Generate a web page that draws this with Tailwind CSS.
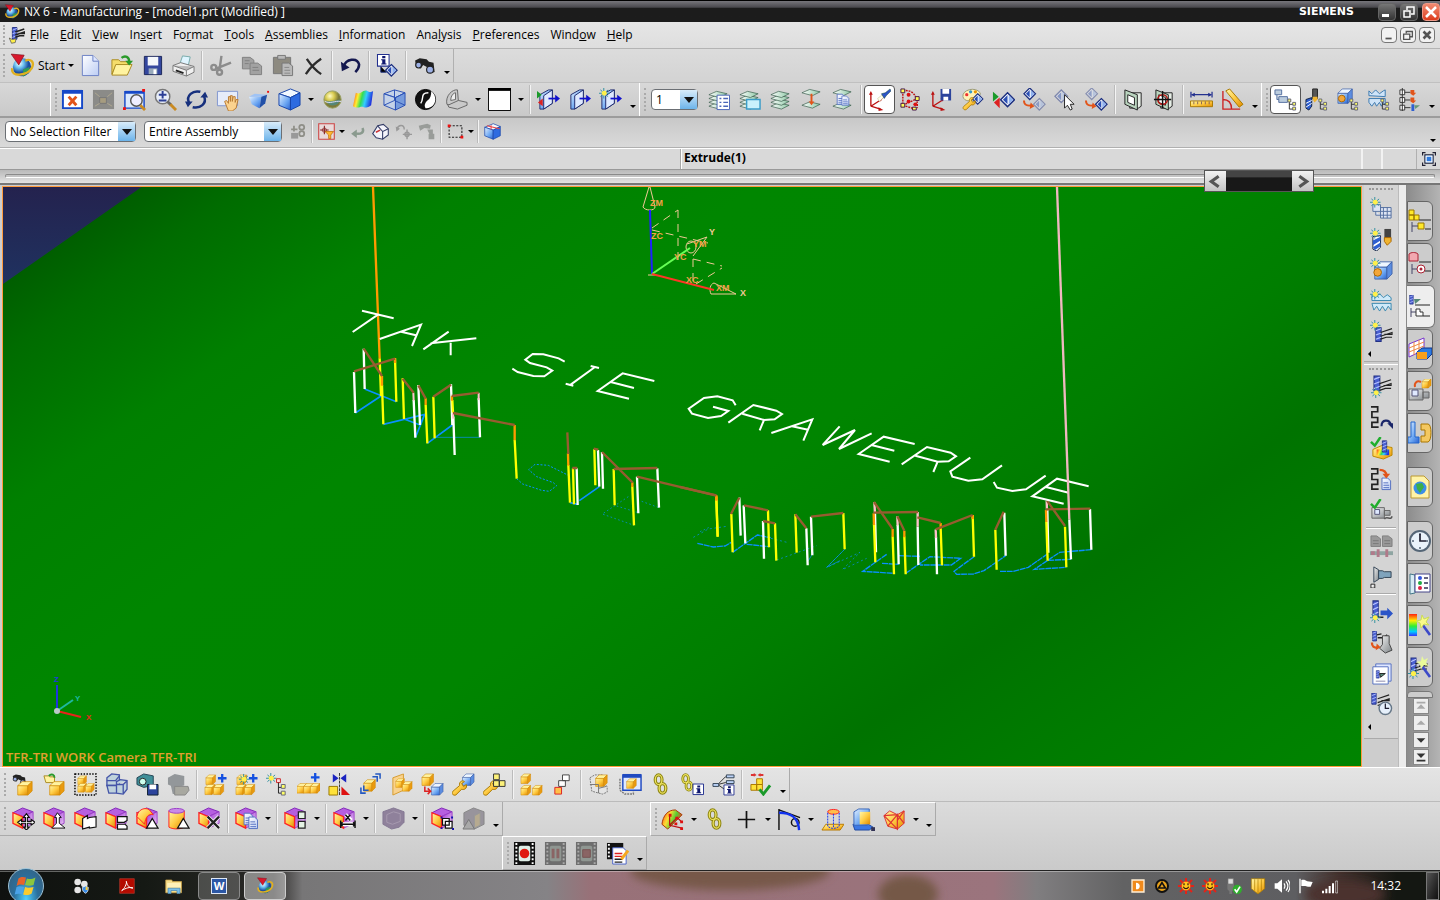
<!DOCTYPE html>
<html lang="en">
<head>
  <meta charset="UTF-8" />
  <meta name="viewport" content="width=device-width, initial-scale=1.0"/>
  <title>NX 6 - Manufacturing</title>
  <script src="https://cdn.jsdelivr.net/npm/@tailwindcss/browser@4"></script>
</head>
<body class="h-screen flex flex-col overflow-hidden bg-[#d4d4d4] text-black text-[12px] leading-4 font-['Open_Sans','Noto_Sans',sans-serif]">

  <!-- Icon sprite -->
  <svg class="absolute" width="0" height="0" aria-hidden="true">
    <defs>
      <linearGradient id="gy" x2="1" y2="1"><stop stop-color="#fff6a8"/><stop offset=".5" stop-color="#fc4"/><stop offset="1" stop-color="#e08a00"/></linearGradient>
      <linearGradient id="gb" x2="1" y2="1"><stop stop-color="#e4f1ff"/><stop offset=".6" stop-color="#6aa5f2"/><stop offset="1" stop-color="#2b62cf"/></linearGradient>
      <linearGradient id="gp" x2="1" y2="1"><stop stop-color="#9a30d0"/><stop offset="1" stop-color="#f3d8fb"/></linearGradient>
      <linearGradient id="gw" x2="1" y2="1"><stop stop-color="#fff"/><stop offset="1" stop-color="#bccdf4"/></linearGradient>
      <linearGradient id="gg" x2="1" y2="1"><stop stop-color="#f4f4f4"/><stop offset="1" stop-color="#7d8387"/></linearGradient>
      <linearGradient id="rain" x2="1" y2=".2"><stop stop-color="#f31"/><stop offset=".3" stop-color="#fe3"/><stop offset=".5" stop-color="#3d5"/><stop offset=".7" stop-color="#3cf"/><stop offset="1" stop-color="#23d"/></linearGradient>
      <linearGradient id="warm" x2="1" y2=".4"><stop stop-color="#f31"/><stop offset=".4" stop-color="#fd3"/><stop offset=".7" stop-color="#5c3"/><stop offset="1" stop-color="#e42"/></linearGradient>
      <linearGradient id="rainv" x2="0" y2="1"><stop stop-color="#f21"/><stop offset=".3" stop-color="#fe0"/><stop offset=".55" stop-color="#3e3"/><stop offset=".8" stop-color="#0cf"/><stop offset="1" stop-color="#33f"/></linearGradient>
      <radialGradient id="gs" cx=".35" cy=".3"><stop stop-color="#fff"/><stop offset=".5" stop-color="#6ac0f0"/><stop offset="1" stop-color="#1d4fa0"/></radialGradient>
      <radialGradient id="ball" cx=".35" cy=".3"><stop stop-color="#fffbc8"/><stop offset=".5" stop-color="#d9cc50"/><stop offset="1" stop-color="#7d7a3a"/></radialGradient>

      <g id="cy" stroke="#d28a00" stroke-width=".5"><path fill="url(#gy)" d="M0 3h7v7H0z"/><path fill="#fff3a0" d="M0 3l3-3h7L7 3z"/><path fill="#e99a10" d="M7 3l3-3v7l-3 3z"/></g>
      <g id="cb" stroke="#3c5fa8" stroke-width=".5"><path fill="url(#gb)" d="M0 3h7v7H0z"/><path fill="#eef6ff" d="M0 3l3-3h7L7 3z"/><path fill="#5c8de0" d="M7 3l3-3v7l-3 3z"/></g>
      <g id="cp"><path fill="#b65fe0" stroke="#8126b8" d="M1 6l10-5 11 4-11 5z"/><path fill="url(#gp)" stroke="#9b3fc8" d="M11 10l11-5v12l-11 5z"/><path fill="url(#gy)" stroke="#f22" stroke-width="1.400" d="M1 6l10 4v12L1 17z"/></g>
      <g id="star"><path stroke="#2f8fa0" d="M5 0v11M0 5.500h11M1.500 2l8 7M9.500 2l-8 7"/><circle cx="5.500" cy="5.500" r="2.600" fill="#fff04a"/></g>
      <g id="tree"><path fill="none" stroke="#333" d="M2 3v8M2 6h4M2 11h4"/><path fill="#ff6" stroke="#667" d="M.5.5h3v3h-3zM5.500 4h3v3h-3zM5.500 9h3v3h-3z"/></g>
      <g id="doc"><path fill="url(#gw)" stroke="#5570c0" d="M.5.5h6l3 3v9h-9z"/><path stroke="#5570c0" d="M2 5.500h5M2 8h6M2 10.500h6"/></g>
      <g id="mill"><path fill="#4a5fd0" stroke="#223083" d="M1 0h5v13H1z"/><path stroke="#b7c3ff" d="M1 3l5-2M1 7l5-2M1 11l5-2"/></g>
      <g id="holder"><path fill="none" stroke="#222" d="M0 4l12-4M0 8l12-4v2H4M0 11l6-2h6"/></g>
      <g id="info"><path fill="#fff" stroke="#23308f" d="M.5.5h11v11H.5z"/><path fill="#101870" d="M5 2h3v2H5zM4 5h4v4h1v1H4V9h1V6H4z"/></g>
      <g id="axes" fill="none" stroke="#b11" stroke-width="1.400"><path d="M3 19V6M3 19l10 3M3 19l11-7"/><path fill="#b11" stroke="none" d="M1 7l2-4 2 4zM11 20l5 3-5 1zM11 11l5-1-3 4z"/></g>
      <g id="dia"><path fill="#fff" stroke="#1b2f80" stroke-width="1.300" d="M6 0l6 6-6 6-6-6z"/><path fill="#2b50b5" d="M6 2v8L2 6z"/><path fill="#8fb1ee" d="M7 2v8l4-4z"/></g>
      <g id="sheet"><path fill="url(#sg)" stroke="#355a48" stroke-width=".7" d="M1 4l8-3.500L20 3l-8 4z"/></g>
      <linearGradient id="sg"><stop stop-color="#fff"/><stop offset="1" stop-color="#8cc7a4"/></linearGradient>
      <g id="chain" fill="none" stroke="#8c8410" stroke-width="3.400"><ellipse cx="8" cy="7" rx="3.500" ry="5"/><ellipse cx="12" cy="16" rx="3.500" ry="5"/><g stroke="#efe560" stroke-width="1.300"><ellipse cx="8" cy="7" rx="3.500" ry="5"/><ellipse cx="12" cy="16" rx="3.500" ry="5"/></g></g>
      <g id="binoc"><path fill="#222" d="M1 4l4-2 6 1 2 2 4 1 1 8-4 1-2-5-4-2-2 3-4-1z"/><circle cx="4" cy="8" r="2.500" fill="#9db1e6" stroke="#222"/><circle cx="14" cy="12" r="3" fill="#9db1e6" stroke="#222"/></g>
      <g id="wrench"><path fill="url(#gy)" stroke="#a87800" d="M1 12l7-6c-1-4 3-6 5-4L10 4l2 3 3-2c1 4-2 6-5 5l-6 6c-3 1-5-2-3-4z"/></g>
      <g id="film"><path fill="#111" d="M1 0h22v24H1z"/><path stroke="#fff" stroke-width="2" stroke-dasharray="2 2" d="M3.500 1v22M20.500 1v22"/><rect x="6" y="4" width="12" height="16" rx="2" fill="#dfeee6"/></g>
      <g id="warn"><path fill="#fff" stroke="#111" stroke-width="1.300" d="M6 0l6 10H0z"/></g>
      <g id="nxball"><circle cx="12" cy="13" r="8.500" fill="url(#gs)"/><path fill="#2f9a5a" d="M13 15l6-2-1 5-5 4z"/><path fill="none" stroke="#e0b020" stroke-width="2.200" d="M3 14c-2 9 14 7 18 0 3-6-1-9-6-7"/><path fill="#d8182c" stroke="#7e0b18" stroke-width=".6" d="M2 1l12 1-5 9z"/></g>
    </defs>

    <symbol id="nx" viewBox="0 0 24 24"><use href="#nxball"/></symbol>
    <symbol id="part" viewBox="0 0 24 24"><use href="#mill" transform="translate(6 2) scale(1.200)"/><use href="#holder" transform="translate(11 4)" stroke-width="2"/><path fill="#fff04a" stroke="#555" d="M3 16l4 2 5-1-1 5-5 1z"/></symbol>
    <!-- standard -->
    <symbol id="new" viewBox="0 0 24 24"><path fill="url(#gw)" stroke="#6a7fc4" d="M3.500 1.500h11l6 6v15h-17z"/><path fill="#dfe7ff" stroke="#6a7fc4" d="M14.500 1.500v6h6"/></symbol>
    <symbol id="open" viewBox="0 0 24 24"><path fill="#f5dd6a" stroke="#a98a20" d="M2 6h7l2 2h8v4H6L2 21z"/><path fill="#fff3a0" stroke="#a98a20" d="M6 11h17l-5 11H2z"/><path fill="none" stroke="#2a9a2a" stroke-width="2.500" d="M12 4c4-3 8-1 8 4"/><path fill="#2a9a2a" d="M16 7h8l-4 5z"/></symbol>
    <symbol id="save" viewBox="0 0 24 24"><path fill="#34479e" stroke="#1b2658" d="M3.500 2.500h18v19h-18z"/><path fill="#f4f7fb" d="M7 3h11v9H7z"/><path fill="#9ab" d="M8 15h9v6H8z"/><path fill="#fff" d="M13 16h3v5h-3z"/></symbol>
    <symbol id="print" viewBox="0 0 24 24"><path fill="#dff5ff" stroke="#7aa" d="M11 2l8 1-2 9-9-1z"/><path fill="#f0f0f0" stroke="#777" d="M1 12l8-3 14 4v6l-8 4L1 18z"/><path fill="#bbb" stroke="#777" d="M1 12l14 5 8-4M15 17v6"/><path stroke="#222" stroke-width="2" d="M4 17l8 3"/></symbol>
    <symbol id="cut" viewBox="0 0 24 24"><g fill="none" stroke="#8c8c8c" stroke-width="2.500"><path d="M13 2l-2 14M23 9L8 15"/><circle cx="11" cy="19" r="2.600"/><circle cx="5" cy="14" r="2.600"/></g></symbol>
    <symbol id="copy" viewBox="0 0 24 24"><g fill="#a2a2a2" stroke="#808080"><path d="M2.500 3.500h8l4 3v9h-12z"/><path d="M10.500 9.500h8l4 3v9h-12z"/><path d="M5 7h5M5 10h4M13 14h6M13 17h7"/></g></symbol>
    <symbol id="paste" viewBox="0 0 24 24"><path fill="#8d8a80" stroke="#777" d="M2.500 3.500h18v17h-18z"/><path fill="#b9b9b9" stroke="#777" d="M7 1.500h8v4H7zM11.500 9.500h7l4 3v10h-11z"/><path stroke="#888" d="M14 14h5M14 17h6M14 20h6"/></symbol>
    <symbol id="delete" viewBox="0 0 24 24"><path fill="none" stroke="#2c2c2c" stroke-width="2.400" d="M5 5c4 6 9 12 15 16M20 5C14 9 8 15 4 21"/></symbol>
    <symbol id="undo" viewBox="0 0 24 24"><path fill="none" stroke="#14184f" stroke-width="2.600" d="M5 13C7 5 19 3 21 11c0 4-2 6-4 8"/><path fill="#14184f" d="M2 8l1 10 8-4z"/></symbol>
    <symbol id="infow" viewBox="0 0 24 24"><use href="#info" transform="translate(1 0) scale(1.100)"/><path stroke="#1b2f80" d="M5 13v6h6"/><use href="#dia" transform="translate(10 11)"/></symbol>
    <symbol id="find" viewBox="0 0 24 24"><use href="#binoc" transform="translate(1 2) scale(1.200)"/></symbol>
    <!-- view -->
    <symbol id="fit" viewBox="0 0 24 24"><path fill="#fff" stroke="#1648c8" stroke-width="2" d="M2 3h20v18H2z"/><path fill="#1648c8" d="M2 2h20v4H2z"/><path stroke="#e2541a" stroke-width="3" d="M8 9l8 9M16 9l-8 9"/></symbol>
    <symbol id="fitsel" viewBox="0 0 24 24"><path fill="#8b8b88" d="M1 2h22v20H1z"/><path fill="#a69c80" stroke="#777" d="M8 10h7v6H8z"/><path stroke="#b0a890" d="M3 5l5 4M21 5l-5 4M3 19l5-3M21 19l-5-3"/></symbol>
    <symbol id="zoomwin" viewBox="0 0 24 24"><path fill="#dbe9fc" stroke="#1648c8" stroke-width="1.500" d="M2 4h20v17H2z"/><path fill="#1648c8" d="M2 3h20v3H2z"/><circle cx="14" cy="13" r="6" fill="#eef" stroke="#555" stroke-width="1.500"/><path stroke="#c98a22" stroke-width="3" d="M18 18l5 5"/><path fill="#e11" d="M20 1h3v3h-3zM0 20h3v3H0z"/></symbol>
    <symbol id="zoomio" viewBox="0 0 24 24"><circle cx="9" cy="9" r="7.500" fill="#e8eef8" stroke="#777" stroke-width="1.500"/><path stroke="#2c3f95" stroke-width="2" d="M5 7h8M9 3v8M5 13h8"/><path stroke="#666" stroke-width="3" d="M14 14l4 4"/><path stroke="#c98a22" stroke-width="3" d="M17 17l6 6"/></symbol>
    <symbol id="rotate" viewBox="0 0 24 24"><g fill="none" stroke="#17307d" stroke-width="2.600"><path d="M4 15C1 8 8 2 16 4M20 9c3 7-4 13-12 11"/></g><path fill="#17307d" d="M0 14h8l-5 6zM16 10l8 0-3-6z"/></symbol>
    <symbol id="pan" viewBox="0 0 24 24"><path fill="#e6ecfa" stroke="#7f95cf" d="M1.500 3.500h21v15h-21z"/><path fill="#fbd28e" stroke="#b87a32" d="M9 14l2-1 2 3V9h2v5-6h2v6l1-5h2v6l1-3h2l-2 9-4 3h-4z"/></symbol>
    <symbol id="persp" viewBox="0 0 24 24"><path fill="url(#gb)" d="M2 9h13l-2 12-8-4z"/><path fill="#9fc3f5" d="M2 9l6-3 13 1-6 2z"/><path fill="#2351a8" d="M15 9l6-2-2 9-6 5z"/><path fill="#e11" d="M21 3h2v2h-2z"/></symbol>
    <symbol id="iso" viewBox="0 0 24 24"><g stroke="#1744a8"><path fill="#f2f8ff" d="M1 6l12-5 10 4-10 5z"/><path fill="url(#gb)" d="M1 6l12 4v13L1 18z"/><path fill="#2e6be0" d="M13 10l10-5v13l-10 5z"/></g></symbol>
    <symbol id="render" viewBox="0 0 24 24"><circle cx="12" cy="12" r="9" fill="url(#ball)" stroke="#98a060"/><path fill="#4b8a86" d="M5 13c5 2 9 0 15-1-1 7-12 9-15 1z" opacity=".8"/><path fill="none" stroke="#ddf" d="M4 14c6 3 10-1 17 0"/></symbol>
    <symbol id="rainbow" viewBox="0 0 24 24"><path fill="url(#rain)" d="M4 5c5 3 7-4 12-2 2 1 3 2 6 0l-2 15c-6 5-8 0-12 2-3 1-5 0-7-1z"/></symbol>
    <symbol id="wire" viewBox="0 0 24 24"><g stroke="#2b50b5" fill="#bcd3f8" fill-opacity=".6"><path d="M1 6l11-4 11 3-10 5z"/><path d="M1 6l12 4v13L1 18z"/><path fill="#3b78e4" d="M13 10l10-5v13l-10 5z"/><path fill="none" d="M12 2v11l11 5M12 13L1 18"/></g></symbol>
    <symbol id="yin" viewBox="0 0 24 24"><circle cx="12" cy="12" r="10.500" fill="#111" stroke="#000"/><path fill="#fff" d="M18 3c8 7 4 19-6 18-2-3 0-6 2-8 3-2 4-5 4-10z"/><path fill="none" stroke="#fff" stroke-width="1.500" d="M15 5c-9 0-4 6-8 11"/></symbol>
    <symbol id="clip" viewBox="0 0 24 24"><g fill="#c9c9c9" stroke="#666"><path d="M2 17C0 8 8 1 13 2l1 12-9 4z"/><path d="M3 18l11-5 9 2v3l-10 4-9-2z"/><path fill="#eee" d="M6 13c0-5 3-8 5-8v7z"/></g></symbol>
    <symbol id="white" viewBox="0 0 24 24"><path fill="#fff" stroke="#000" d="M.5.5h23v23H.5z"/><path d="M0 0h24v3H0z"/></symbol>
    <symbol id="slab" viewBox="0 0 24 24"><g stroke="#1e2a6e"><path fill="url(#gb)" d="M3 7l9-5h4v14l-9 6H3z"/><path fill="#dfe9ff" d="M7 8l9-6v14l-9 6z"/></g><path stroke="#11c" stroke-width="1.800" d="M12 11h8"/><path fill="#11c" d="M19 7l5 4-5 4z"/></symbol>
    <symbol id="slabgo" viewBox="0 0 24 24"><use href="#slab"/><path fill="#1a9a2a" d="M0 3l5 4-5 4z"/><path fill="#d22" d="M6 11v8l-5-4z"/></symbol>
    <symbol id="slabnew" viewBox="0 0 24 24"><use href="#slab"/><use href="#star"/></symbol>
    <!-- layers -->
    <symbol id="stack" viewBox="0 0 24 24"><use href="#sheet" x="1" y="15"/><use href="#sheet" x="1" y="11"/><use href="#sheet" x="1" y="7"/><use href="#sheet" x="1" y="3"/></symbol>
    <symbol id="layset" viewBox="0 0 24 24"><use href="#stack"/><path fill="#fff" stroke="#4b66b8" d="M10.500 7.500h13v15h-13z"/><path stroke="#4b66b8" stroke-width="1.500" d="M13 11h2M13 15h2M13 19h2M17 11h5M17 15h5M17 19h5"/></symbol>
    <symbol id="laywin" viewBox="0 0 24 24"><use href="#stack"/><path fill="#c9f1fc" stroke="#3b9cc8" stroke-width="1.500" d="M9 12h14v10H9z"/></symbol>
    <symbol id="laymove" viewBox="0 0 24 24"><use href="#sheet" x="1" y="1"/><use href="#sheet" x="1" y="14"/><path fill="#e2541a" d="M11 6h2v8h2l-3 4-3-4h2z"/></symbol>
    <symbol id="laycopy" viewBox="0 0 24 24"><use href="#sheet" x="1" y="1"/><use href="#sheet" x="1" y="15"/><use href="#doc" transform="translate(6 6) scale(.9)"/><use href="#doc" transform="translate(11 8) scale(.8)"/></symbol>
    <!-- wcs and object display -->
    <symbol id="wcs" viewBox="0 0 24 24"><use href="#axes"/><path fill="#ffe" stroke="#bb8" stroke-width=".5" d="M10 11l5-4 2 2-5 5z"/><path fill="#2c55c8" stroke="#143" stroke-width=".5" d="M14 6l4-1 5-4 1 2-5 5-2 3z"/></symbol>
    <symbol id="wcsdyn" viewBox="0 0 24 24"><path fill="none" stroke="#b11" stroke-dasharray="2 1" stroke-width="1.500" d="M4 3v15l13 4M4 18l15-7M4 3c10-2 16 5 15 18"/><path fill="#ff5" stroke="#414" d="M2 1h4v4H2zM2 16h4v4H2zM17 9h4v4h-4zM14 20h4v3h-4z"/><circle cx="10" cy="7" r="2" fill="#d11"/><circle cx="10" cy="14" r="2" fill="#d11"/><circle cx="17" cy="17" r="2" fill="#d11"/></symbol>
    <symbol id="wcssave" viewBox="0 0 24 24"><use href="#axes"/><path fill="#2c449c" d="M11 1h11v12H11z"/><path fill="#fff" d="M13 1h7v5h-7zM14 9h5v4h-5z"/></symbol>
    <symbol id="palette" viewBox="0 0 24 24"><path fill="#fff3b8" stroke="#997" d="M2 9C1 2 15-2 20 5c1 5-5 3-6 6-3 4-11 3-12-2z"/><g><circle cx="6" cy="7" r="1.700" fill="#e33"/><circle cx="10" cy="4" r="1.700" fill="#39c"/><circle cx="15" cy="4" r="1.700" fill="#e90"/></g><use href="#dia" transform="translate(12 6) scale(.9)"/><use href="#wrench" transform="translate(2 9) scale(.85)"/></symbol>
    <symbol id="showhide" viewBox="0 0 24 24"><path fill="#1a9a2a" d="M1 4l6 5-6 5z"/><path fill="#d22" d="M8 10v11l-6-6z"/><use href="#dia" transform="translate(9 5) scale(1.200)"/></symbol>
    <symbol id="hide" viewBox="0 0 24 24"><use href="#dia" transform="translate(1 0)"/><use href="#dia" transform="translate(11 11)" opacity=".4"/><path fill="none" stroke="#e2541a" stroke-width="2" d="M1 13c0 5 4 6 8 5"/><path fill="#e2541a" d="M8 15l4 4-5 3z"/></symbol>
    <symbol id="showsel" viewBox="0 0 24 24"><use href="#dia" transform="translate(1 2) scale(1.100)" opacity=".45"/><path fill="#fff" stroke="#222" d="M11 7v14l3-3 3 5 2-1-2-5h4z"/></symbol>
    <symbol id="showall" viewBox="0 0 24 24"><use href="#dia" transform="translate(1 0)" opacity=".4"/><use href="#dia" transform="translate(11 11)"/><path fill="none" stroke="#e2541a" stroke-width="2" d="M1 13c0 5 4 6 8 5"/><path fill="#e2541a" d="M8 15l4 4-5 3z"/></symbol>
    <symbol id="section" viewBox="0 0 24 24"><g stroke="#222" fill="#e6eee6"><path d="M10 5h10v14l-3 2H8z"/><path fill="#b9d4be" d="M3 2l13 5v16L3 17z"/><path fill="#fff" d="M6 7l7 3v8l-7-3z"/></g></symbol>
    <symbol id="sectedit" viewBox="0 0 24 24"><use href="#section"/><g fill="none" stroke="#b11" stroke-width="1.500"><circle cx="10" cy="12" r="5"/></g><path stroke="#111" stroke-width="1.500" d="M1 12h18M10 3v18"/></symbol>
    <symbol id="measure" viewBox="0 0 24 24"><path fill="url(#gy)" stroke="#a87800" d="M.5 13.500h23v6H.5z"/><path stroke="#865" d="M4 14v3M8 14v3M12 14v3M16 14v3M20 14v3"/><path stroke="#23308f" stroke-width="1.300" d="M2 7h20M1 4v6M23 4v6"/><path fill="#23308f" d="M1 7l4-2v4zM23 7l-4-2v4z"/></symbol>
    <symbol id="angle" viewBox="0 0 24 24"><path fill="none" stroke="#c22" stroke-width="1.400" d="M2 3v19h18M2 12c6 0 9 4 9 10"/><path fill="url(#gy)" stroke="#a87800" d="M5 3l4-2 14 16-4 3z"/></symbol>
    <!-- navigator views -->
    <symbol id="navprog" viewBox="0 0 24 24"><path fill="#bcd" stroke="#5570a0" d="M1 2h7v5H1zM5 9h9v6H5zM3 7v5h2"/><use href="#tree" transform="translate(14 11)"/></symbol>
    <symbol id="navtool" viewBox="0 0 24 24"><path fill="#555" stroke="#222" d="M8 1h5v10H8z"/><path fill="#f0b430" d="M8 9h5v3l-3 3-2-3z"/><path fill="#2f5fd0" stroke="#124" d="M1 12l6-2v9l-3 4-3-2z"/><path stroke="#fff" d="M1 16l6-3M1 20l6-4"/><use href="#tree" transform="translate(14 11)"/></symbol>
    <symbol id="navgeo" viewBox="0 0 24 24"><use href="#cb" transform="translate(2 1) scale(1.500)"/><circle cx="6" cy="11" r="3.500" fill="#f3a63a" stroke="#a60"/><use href="#tree" transform="translate(14 11)"/></symbol>
    <symbol id="navmeth" viewBox="0 0 24 24"><path fill="#cfe4f8" stroke="#3a78b0" d="M2 8V3l3 3 4-4 4 4 4-3 2-1v7zM2 11h17v7l-2-3-2 4-2-4-3 4-2-4-3 4-3-4z"/><use href="#tree" transform="translate(14 11)"/></symbol>
    <symbol id="navexp" viewBox="0 0 24 24"><path fill="#fff" stroke="#333" d="M2 2h5v5H2zM2 10h5v5H2zM2 18h5v5H2zM4.500 0v24M7 4.500h6M7 12.500h6M7 20.500h6"/><path fill="#e2541a" d="M13 2h4v3h2l-3 3-3-2zM13 10h4v3h2l-3 3-3-2z"/><path fill="#2f5fd0" d="M14 17h3v7h-3z"/><path fill="#697" d="M17 18h6l-5 4z"/></symbol>
    <!-- selection bar -->
    <symbol id="selgrey" viewBox="0 0 24 24"><g fill="none" stroke="#8f8f88" stroke-width="2.500"><path d="M3 9h9M7 4v8"/><circle cx="18" cy="6" r="3.500"/><circle cx="18" cy="15" r="3.500"/></g><path fill="#999" d="M3 14h10v8H3z"/></symbol>
    <symbol id="selfilt" viewBox="0 0 24 24"><path fill="#e9dada" stroke="#c44" stroke-width="1.500" d="M1 1h22v22H1z"/><circle cx="9" cy="10" r="3" fill="none" stroke="#822"/><path stroke="#822" stroke-width="1.500" d="M9 4v12M3 10h12"/><path fill="#ffb62e" stroke="#b60" d="M10 12h12l-4 5v5h-3v-5z"/></symbol>
    <symbol id="back" viewBox="0 0 24 24"><path fill="none" stroke="#8a9a8e" stroke-width="3.500" d="M19 7c3 6-2 9-9 8"/><path fill="#8a9a8e" d="M3 15l8-6v12z"/></symbol>
    <symbol id="eraser" viewBox="0 0 24 24"><path fill="#f4f4fb" stroke="#333c66" stroke-width="1.500" d="M1 15l7-11 8-2 7 6v9l-8 6-9-2z"/><path fill="none" stroke="#333c66" stroke-width="1.500" d="M15 23V12l8-4M8 4l7 8"/><path fill="#c33" d="M5 12l6-3 1 2-6 3z"/></symbol>
    <symbol id="greyaim" viewBox="0 0 24 24"><g fill="none" stroke="#999" stroke-width="2"><path d="M3 8c2-6 10-6 10 1M11 16h13M17 9v14"/><circle cx="17" cy="16" r="3"/></g><path fill="#999" d="M1 5l1 7 5-4z"/></symbol>
    <symbol id="greytool" viewBox="0 0 24 24"><path fill="#999c99" d="M1 4l12-3 5 2-1 5-8-1-6 4zM13 9h8v6h-5zM15 15h8v8h-8z"/></symbol>
    <symbol id="rect" viewBox="0 0 24 24"><path fill="none" stroke="#222" stroke-width="1.500" stroke-dasharray="3 2" d="M3 4h18v16H3z"/><path fill="#e11" d="M1 2h4v4H1zM19 18h4v4h-4z"/></symbol>
    <symbol id="snapcube" viewBox="0 0 24 24"><use href="#iso"/><path stroke="#e44" stroke-width="1.500" d="M10 3v6M4 4l18 4"/></symbol>
    <symbol id="full" viewBox="0 0 24 24"><path fill="none" stroke="#223" stroke-width="2" d="M1 6V1h5M18 1h5v5M23 18v5h-5M6 23H1v-5"/><path fill="#2e7be0" stroke="#223" stroke-width="2" d="M5 5h14v14H5z"/><path fill="none" stroke="#fff" stroke-width="2" d="M7 7h10v10H7z"/></symbol>
    <!-- assemblies -->
    <symbol id="a1" viewBox="0 0 24 24"><use href="#binoc" transform="translate(0 0) scale(.8)"/><use href="#cy" transform="translate(6 9) scale(1.500 1.400)"/></symbol>
    <symbol id="a2" viewBox="0 0 24 24"><path fill="#fff3a0" stroke="#a98a20" d="M1 3h5l1 1h5v6H3z"/><path fill="none" stroke="#2a9a2a" stroke-width="2" d="M6 3c3-3 6-1 6 2"/><use href="#cy" transform="translate(7 9) scale(1.500 1.400)"/></symbol>
    <symbol id="a3" viewBox="0 0 24 24"><path fill="none" stroke="#000" stroke-width="1.500" stroke-dasharray="1.500 1.500" d="M1 1h22v22H1z"/><use href="#cy" transform="translate(4 3) scale(.9)"/><use href="#cy" transform="translate(4 11) scale(.9)"/><use href="#cy" transform="translate(12 11) scale(.9)"/></symbol>
    <symbol id="a4" viewBox="0 0 24 24"><g fill="#bfd2dc" stroke="#4555a8" stroke-width="1.400"><path d="M2 5l5-4 8 1v11H2z"/><path d="M2 13h10v8H4zM12 9l4-2 7 1v9l-4 5-7-1zM12 12h7l4-4M19 12v9M2 8h9l4-5"/></g></symbol>
    <symbol id="a5" viewBox="0 0 24 24"><path fill="#3f8f98" stroke="#245" d="M1 5l7-4 10 2v10l-10 2-7-3z"/><circle cx="7" cy="9" r="3.500" fill="#cfe" stroke="#222"/><path fill="#2c449c" stroke="#123" d="M12 12h11v11H12z"/><path fill="#fff" d="M14 12h7v5h-7z"/></symbol>
    <symbol id="a6" viewBox="0 0 24 24"><path fill="#93979a" d="M1 5l7-4 10 2v10l-10 2-7-3zM4 13h9v9H6z"/><path fill="#a8a8a0" stroke="#888" d="M8 14h14l1 4-4 5H8z"/></symbol>
    <symbol id="a7" viewBox="0 0 24 24"><use href="#cy" transform="translate(2 2)"/><use href="#cy" transform="translate(1 12) scale(1.050)"/><use href="#cy" transform="translate(10 12) scale(1.050)"/><path stroke="#1450e0" stroke-width="2.400" d="M19 1v9M14.500 5.500h9"/></symbol>
    <symbol id="a8" viewBox="0 0 24 24"><use href="#a7"/><use href="#star" transform="translate(4 1)"/></symbol>
    <symbol id="a9" viewBox="0 0 24 24"><use href="#star"/><path fill="#fdd" stroke="#c22" d="M11 6h4v4h-4z"/><path stroke="#222" d="M13 10v11h3M13 15h3" fill="none"/><path fill="#ff6" stroke="#667" d="M16 12h4v4h-4zM16 19h4v4h-4z"/></symbol>
    <symbol id="a10" viewBox="0 0 24 24"><use href="#cy" transform="translate(0 11)"/><use href="#cy" transform="translate(7 11)"/><use href="#cy" transform="translate(14 11)"/><path stroke="#1450e0" stroke-width="2.400" d="M19 0v9M14.500 4.500h9"/></symbol>
    <symbol id="a11" viewBox="0 0 24 24"><path fill="#1a23c0" d="M5 1v9l6-4.500zM19 1v9l-6-4.500z"/><path stroke="#333" stroke-dasharray="3 1" d="M12 0v24"/><path fill="#ffe23a" stroke="#970" d="M1 14h9v9H1z"/><path fill="#d11" d="M14 14l9 9h-9z"/></symbol>
    <symbol id="a12" viewBox="0 0 24 24"><use href="#cy" transform="translate(5 7) scale(1.200)"/><path fill="none" stroke="#2458c0" stroke-width="1.600" d="M17 1h5v5M14 4h5v5M2 15v6h5M5 13v5h5"/></symbol>
    <symbol id="a13" viewBox="0 0 24 24"><path fill="#ffcf7a" stroke="#d28a00" d="M3 5l11-4v17L3 23z" opacity=".8"/><use href="#cy" transform="translate(6 6) scale(.9)"/><use href="#cy" transform="translate(13 9)"/></symbol>
    <symbol id="a14" viewBox="0 0 24 24"><use href="#cy" transform="translate(1 1) scale(1.200)"/><use href="#cb" transform="translate(11 11) scale(1.200)"/><path fill="none" stroke="#d22" stroke-width="1.600" d="M4 14v5h5M7 16l3 3-3 3"/></symbol>
    <symbol id="a15" viewBox="0 0 24 24"><use href="#cb" transform="translate(11 1) scale(1.200)"/><use href="#wrench" transform="translate(0 7)"/></symbol>
    <symbol id="a16" viewBox="0 0 24 24"><use href="#wrench" transform="translate(0 7)"/><path fill="#fbf07a" stroke="#333" d="M11 1h6v6h-6zM11 8h6v6h-6zM17 8h6v6h-6z"/></symbol>
    <symbol id="a17" viewBox="0 0 24 24"><use href="#cy" transform="translate(1 1)"/><use href="#cy" transform="translate(1 13)"/><use href="#cy" transform="translate(13 13)"/></symbol>
    <symbol id="a18" viewBox="0 0 24 24"><path fill="#fff" stroke="#444" d="M12 2h7v6h-7zM8 8h7v6H8z"/><path fill="#ffc04a" stroke="#d22" d="M4 15h7v7H4z"/></symbol>
    <symbol id="a19" viewBox="0 0 24 24"><path fill="#e4e4e4" stroke="#777" stroke-dasharray="2 1" d="M2 5l5-3h8v9l5 3v6l-5 2-11-3z"/><use href="#cy" transform="translate(8 2) scale(1.200)"/><path fill="none" stroke="#777" d="M2 12h9v9M11 16l8-2"/></symbol>
    <symbol id="a20" viewBox="0 0 24 24"><path fill="#dfe9ff" stroke="#1f49c0" stroke-width="1.500" d="M4 2h19v16H4z"/><path fill="#1f49c0" d="M4 1h19v4H4z"/><use href="#cy" transform="translate(8 6)"/><path fill="none" stroke="#777" stroke-dasharray="2 1" stroke-width="1.500" d="M1 6v12l5 4h9v-3"/></symbol>
    <symbol id="a21" viewBox="0 0 24 24"><use href="#chain" transform="translate(1 0)"/></symbol>
    <symbol id="a22" viewBox="0 0 24 24"><use href="#chain" transform="translate(-2 0) scale(.85)"/><use href="#info" transform="translate(12 11)"/></symbol>
    <symbol id="a23" viewBox="0 0 24 24"><path fill="none" stroke="#333" d="M6 12L14 4h2M6 12l8-2h2M6 12l7 5"/><path fill="#bcd3f8" stroke="#345" d="M1 11h6v3H1zM15 2h8v3h-8zM15 8h8v3h-8z"/><use href="#info" transform="translate(12 12) scale(.95)"/></symbol>
    <symbol id="a24" viewBox="0 0 24 24"><path fill="#d33" d="M2 1h3V0l3 2-3 2V3H2zM15 1h-3V0L9 2l3 2V3h3z"/><path fill="#ffe23a" stroke="#a70" d="M8 6h6v6H8zM2 12h6v6H2zM8 12h6v6H8z"/><path fill="none" stroke="#1a9a2a" stroke-width="3" d="M11 17l4 5 7-9"/></symbol>
    <!-- synchronous modelling -->
    <symbol id="s1" viewBox="0 0 24 24"><use href="#cp"/><path fill="#fff" stroke="#111" stroke-width="1.200" d="M15 7l3 4h-2v4h4v-2l4 3-4 3v-2h-4v4h2l-3 3-3-3h2v-4h-4v2l-4-3 4-3v2h4v-4h-2z"/></symbol>
    <symbol id="s2" viewBox="0 0 24 24"><use href="#cp"/><path fill="#fff" stroke="#111" d="M15 6l4 5h-2v6l6 5H9l5-5v-6h-2z"/></symbol>
    <symbol id="s3" viewBox="0 0 24 24"><use href="#cp"/><path fill="#fff" stroke="#111" stroke-width="1.200" d="M9 12l5-3v3l2-1 7-1v11l-7 1v-1l-7 2z"/></symbol>
    <symbol id="s4" viewBox="0 0 24 24"><use href="#cp"/><path fill="#fff" stroke="#111" stroke-width="1.300" d="M13 10h10v4l-3 2h-7zM13 18h8l2 2v3H13z"/></symbol>
    <symbol id="s5" viewBox="0 0 24 24"><use href="#cp"/><path fill="url(#gy)" stroke="#f22" d="M1 10c1-8 9-10 13-7l4 5c-5-1-8 2-9 10z"/><use href="#warn" transform="translate(11 12)"/></symbol>
    <symbol id="s6" viewBox="0 0 24 24"><path fill="url(#gy)" stroke="#f22" d="M2 4v17c5 3 13 2 16 0V4z"/><ellipse cx="10" cy="4" rx="8" ry="2.500" fill="#c98be8" stroke="#9b3fc8"/><use href="#warn" transform="translate(11 12)"/></symbol>
    <symbol id="s7" viewBox="0 0 24 24"><use href="#cp"/><path stroke="#fff" stroke-width="4" d="M10 10l12 12M22 10L10 22"/><path stroke="#222" stroke-width="2.400" d="M10 10l12 12M22 10L10 22"/></symbol>
    <symbol id="s8" viewBox="0 0 24 24"><use href="#cp"/><use href="#doc" transform="translate(9 6)"/><use href="#doc" transform="translate(14 10)"/></symbol>
    <symbol id="s9" viewBox="0 0 24 24"><use href="#cp"/><path fill="#e4f3e4" stroke="#222" stroke-width="1.300" d="M15 5h7v7h-7zM15 15h7v7h-7z"/></symbol>
    <symbol id="s10" viewBox="0 0 24 24"><use href="#cp"/><path stroke="#fff" stroke-width="4" d="M8 18h15M13 8l6 6"/><path fill="none" stroke="#111" stroke-width="1.500" d="M8 18h15M8 14v8M23 14v8M13 8l5 6M18 8l-5 6M10 16l-2 2 2 2M21 16l2 2-2 2"/></symbol>
    <symbol id="s11" viewBox="0 0 24 24"><path fill="#8f819b" stroke="#857893" d="M1 5l11-4 11 4v11l-5 5-8 2-9-5z"/><path fill="none" stroke="#a79bb0" d="M5 8v8l6 2 8-3V7M5 8l7-3 7 2"/></symbol>
    <symbol id="s12" viewBox="0 0 24 24"><use href="#cp"/><path fill="#fff" stroke="#111" stroke-width="1.300" d="M12 12h7v7h-7zM15 15h7v7h-7z"/><path fill="#11a" d="M10 10h2v2h-2zM21 10h2v2h-2zM10 21h2v2h-2zM22 22h2v2h-2z"/></symbol>
    <symbol id="s13" viewBox="0 0 24 24"><path fill="#98949c" stroke="#888" d="M2 6l10-5 11 4v13l-10 5L2 19z"/><path fill="#b6aa90" stroke="#999" d="M13 9l6-3v13l-6 3z"/><path fill="#a9a9a9" stroke="#777" d="M7 13l6 10H1z"/></symbol>
    <!-- curves and features -->
    <symbol id="f1" viewBox="0 0 24 24"><path fill="url(#warm)" stroke="#a30" d="M1 17C2 8 7 2 15 2l7 5-8 8-7 7z"/><path fill="none" stroke="#b11" stroke-width="1.300" d="M9 7v11l13 3M9 18l8-8 4 4"/><path fill="#d11" d="M15 9h3v3h-3zM20 13h3v3h-3zM20 20h3v3h-3zM14 15h3v3h-3zM8 6h3v3H8z"/></symbol>
    <symbol id="f2" viewBox="0 0 24 24"><path stroke="#111" stroke-width="1.800" d="M12 3v18M3 12h18"/></symbol>
    <symbol id="f3" viewBox="0 0 24 24"><path fill="none" stroke="#111" stroke-width="1.500" d="M1 1v22M1 2l22 8"/><circle cx="18" cy="15" r="4" fill="none" stroke="#111" stroke-width="1.500"/><path fill="none" stroke="#1233f0" stroke-width="2.500" d="M1 5c12 0 20 4 21 18"/></symbol>
    <symbol id="f4" viewBox="0 0 24 24"><path fill="url(#gy)" stroke="#b87a00" d="M5 17h19l-4 6H1z"/><ellipse cx="13" cy="4" rx="6" ry="2.500" fill="#ffbf4a" stroke="#f22"/><path fill="none" stroke="#1233f0" stroke-dasharray="2 1" d="M7 5v14c3 3 9 3 12 0V5M13 6v14"/></symbol>
    <symbol id="f5" viewBox="0 0 24 24"><path fill="#3b78e4" stroke="#1f49a0" d="M1 17h16l5 3-4 3H3z"/><path fill="url(#gb)" stroke="#3b66b8" d="M2 4l5-3h11v15l-2 2H2z"/><path fill="url(#gy)" d="M8 4h11v13H8z"/><path fill="#335" d="M20 20h4v4h-4z"/></symbol>
    <symbol id="f6" viewBox="0 0 24 24"><path fill="url(#gy)" stroke="#d33" d="M1 8l6-5 8 4 7-4v13l-7 6-10-3z"/><path fill="none" stroke="#d33" stroke-width="1.300" d="M1 8l14 14V7L5 19M1 8l14-1 7 9M22 3l-7 10"/></symbol>
    <symbol id="m1" viewBox="0 0 24 24"><use href="#film"/><circle cx="12" cy="12" r="5" fill="#e01b10"/></symbol>
    <symbol id="m2" viewBox="0 0 24 24"><path fill="#6e6e6e" d="M1 0h22v24H1z"/><path stroke="#aaa" stroke-width="2" stroke-dasharray="2 2" d="M3.500 1v22M20.500 1v22"/><rect x="6" y="4" width="12" height="16" rx="2" fill="#8f9691"/><path fill="#8a6464" d="M8 7h3v10H8zM13 7h3v10h-3z"/></symbol>
    <symbol id="m3" viewBox="0 0 24 24"><path fill="#6e6e6e" d="M1 0h22v24H1z"/><path stroke="#aaa" stroke-width="2" stroke-dasharray="2 2" d="M3.500 1v22M20.500 1v22"/><rect x="6" y="4" width="12" height="16" rx="2" fill="#8f9691"/><path fill="#8a6464" stroke="#755" d="M8 8h8v8H8z"/></symbol>
    <symbol id="m4" viewBox="0 0 24 24"><path fill="#111" d="M1 1h17v17H1z"/><path stroke="#fff" stroke-width="2" stroke-dasharray="2 2" d="M3 2v15"/><path fill="#fff" stroke="#4a63c8" d="M7 6h11l3 3v14H7z"/><path stroke="#d22" stroke-width="1.500" d="M9 12h8M9 15h8"/><path stroke="#222" stroke-width="1.500" d="M9 18h8M9 21h8"/><path stroke="#f6a820" stroke-width="3" d="M16 18l7-9"/></symbol>
    <!-- cam column -->
    <symbol id="r1" viewBox="0 0 24 24"><path fill="#dde5f4" stroke="#5570a0" d="M3 8h8v7H3zM11 11h11v11H11zM6 15v4h5M14 11v11M18 11v11M11 15h11M11 19h11"/><use href="#star"/></symbol>
    <symbol id="r2" viewBox="0 0 24 24"><path fill="#fff" stroke="#124" d="M3 9l8-1v12l-4 4-4-2z"/><path fill="#2f5fd0" d="M3 13l8-4v4l-8 5zM3 20l8-5v4l-6 4z"/><path fill="#444" d="M15 1h7v10h-7z"/><path fill="#f0b430" stroke="#a60" d="M15 10h7v4l-4 4-3-4z"/><use href="#star"/></symbol>
    <symbol id="r3" viewBox="0 0 24 24"><use href="#cb" transform="translate(5 4) scale(1.800)"/><circle cx="8" cy="15" r="4" fill="#f3a63a" stroke="#a60"/><use href="#star"/></symbol>
    <symbol id="r4" viewBox="0 0 24 24"><path fill="#cfe9f8" stroke="#3a88b0" d="M2 12V6l4 3 4-4 4 4 4-3 4 3v3zM2 15h20v7l-3-4-3 5-3-5-3 5-3-5-3 4z"/><use href="#star"/></symbol>
    <symbol id="r5" viewBox="0 0 24 24"><use href="#mill" transform="translate(5 8) scale(1.100)"/><use href="#holder" transform="translate(11 9)" stroke-width="1.200"/><use href="#star"/></symbol>
    <symbol id="r6" viewBox="0 0 24 24"><use href="#mill" transform="translate(3 1) scale(1.200)"/><use href="#holder" transform="translate(10 5)" stroke-width="1.200"/><use href="#star" transform="translate(1 13)"/></symbol>
    <symbol id="r7" viewBox="0 0 24 24"><path fill="none" stroke="#222" stroke-width="1.800" d="M1 1h7v5H2v6h6v5H2v5h7"/><path fill="none" stroke="#1a2668" stroke-width="2.200" d="M12 21c0-7 8-8 10-1"/><path fill="#1a2668" d="M18 18h6v6z"/></symbol>
    <symbol id="r8" viewBox="0 0 24 24"><path fill="url(#gy)" stroke="#b80" d="M3 13l9-4 11 2v8l-9 4-11-3z"/><path fill="url(#rain)" d="M7 13h13v6H7z"/><use href="#mill" transform="translate(12 4) scale(.9)"/><path fill="none" stroke="#1fae2c" stroke-width="2.600" d="M1 5l4 4 6-9"/></symbol>
    <symbol id="r9" viewBox="0 0 24 24"><path fill="none" stroke="#222" stroke-width="1.800" d="M1 1h7v5H2v6h6v5H2v5h7"/><use href="#doc" transform="translate(12 10)"/><path fill="none" stroke="#e2541a" stroke-width="2.400" d="M10 2c5 0 7 2 7 6"/><path fill="#e2541a" d="M13 6h8l-4 5z"/></symbol>
    <symbol id="r10" viewBox="0 0 24 24"><path fill="url(#gg)" stroke="#666" d="M2 9h13v11H2zM15 12h6v5h-6z"/><path fill="#dfe9ff" stroke="#557" d="M5 11h5v5H5z"/><path fill="none" stroke="#555" stroke-width="1.500" d="M15 21c2-4 7 2 8-3"/><path fill="none" stroke="#1fae2c" stroke-width="2.600" d="M1 5l4 4 6-9"/></symbol>
    <symbol id="r11" viewBox="0 0 24 24"><path fill="#999" stroke="#808080" d="M1 2h6l4 3v8H1zM13 2h6l4 3v8H13z"/><path stroke="#777" d="M3 7h6M3 10h6M15 7h6M15 10h6"/><path fill="#8fa5a2" d="M0 18h24v4H0z"/><path fill="#b07a8a" d="M7 16h3v8H7zM16 16h3v8h-3zM1 18h4v4H1z"/></symbol>
    <symbol id="r12" viewBox="0 0 24 24"><path fill="url(#gg)" stroke="#345" d="M4 2l5 3v10l-5 3z"/><path fill="#7fa3bc" stroke="#345" d="M9 6h4l2 1h7v6h-7l-2 1H9z"/><path fill="#fff" stroke="#222" d="M1 20h4v4H1zM3 22h.5"/></symbol>
    <symbol id="r13" viewBox="0 0 24 24"><use href="#mill" transform="translate(2 1) scale(1.100 1.300)"/><path stroke="#222" stroke-width="1.500" d="M8 18h6"/><path fill="#2c55c8" d="M11 11h7V8l6 6-6 6v-4h-7z"/><use href="#star" transform="translate(0 13)"/></symbol>
    <symbol id="r14" viewBox="0 0 24 24"><use href="#mill" transform="translate(2 0) scale(.8)"/><path fill="none" stroke="#222" stroke-width="1.500" d="M7 4l5-1M8 7h6l4-3"/><path fill="url(#gg)" stroke="#444" d="M13 5h7v8l3 7-7 3-6-5 3-4z"/><path fill="none" stroke="#e2541a" stroke-width="2.400" d="M2 12c0 4 2 6 6 5"/><path fill="#e2541a" d="M7 13l4 4-5 3z"/></symbol>
    <symbol id="r15" viewBox="0 0 24 24"><path fill="#dfe7ff" stroke="#5570c0" d="M6 2h16v18H6z"/><path fill="#fff" stroke="#5570c0" d="M3 5h16v18H3z"/><use href="#mill" transform="translate(6 9) scale(.6)"/><path fill="#587" stroke="#222" d="M10 12h6l-5 4z"/><path stroke="#88a" d="M6 20h10"/></symbol>
    <symbol id="r16" viewBox="0 0 24 24"><use href="#mill" transform="translate(1 0) scale(.9)"/><use href="#holder" transform="translate(8 2)" stroke-width="1.200"/><circle cx="16" cy="16" r="6.500" fill="#e6f0fb" stroke="#678" stroke-width="1.500"/><path fill="none" stroke="#223" stroke-width="1.300" d="M16 11v5h4"/></symbol>
    <!-- resource tabs -->
    <symbol id="t1" viewBox="0 0 24 24"><path fill="#ffe92a" stroke="#970" d="M1 6h5v5H1zM6 6h5v5H6zM1 1h5v5H1zM10 14h6v6h-6z"/><path fill="none" stroke="#446" d="M4 13v10M4 17h6"/><path stroke="#222" d="M11 11h12M17 20h6"/></symbol>
    <symbol id="t2" viewBox="0 0 24 24"><path fill="#f2a8b0" stroke="#a23" d="M1 3c2-2 7-2 9 0v7H1z"/><circle cx="13" cy="18" r="4" fill="#fff" stroke="#a23"/><circle cx="13" cy="18" r="1.500" fill="#a23"/><path fill="none" stroke="#446" d="M4 13v10M4 18h5"/><path stroke="#222" d="M11 11h12M17 20h6"/></symbol>
    <symbol id="t3" viewBox="0 0 24 24"><use href="#mill" transform="translate(2 0) scale(.7)"/><path fill="#587" d="M7 4h7l-6 5z"/><path fill="none" stroke="#446" d="M4 13v9M4 17h5"/><path fill="#fff" stroke="#333" d="M9 14h4v3h3v4H9z"/><path stroke="#222" d="M8 10h15M16 21h7"/></symbol>
    <symbol id="t4" viewBox="0 0 24 24"><path fill="#fff" stroke="#73c" d="M1 7l15-6v12L1 20z"/><path stroke="#e84" d="M1 11l15-6M1 15l15-6M6 5v13M11 3v13" /><path fill="#2c7be0" stroke="#138" d="M9 15l5-4h10v6l-5 5H9z"/><path fill="#f8a01c" d="M9 15h10v7H9z"/></symbol>
    <symbol id="t5" viewBox="0 0 24 24"><path fill="url(#gg)" stroke="#666" d="M1 10h14v11H1zM15 13h6v6h-6z"/><path fill="#dfe9ff" stroke="#557" d="M4 11h6v6H4z"/><use href="#cy" transform="translate(14 0) scale(.9)"/><path fill="none" stroke="#e2541a" stroke-width="2" d="M13 3C9 1 6 4 7 8"/></symbol>
    <symbol id="t6" viewBox="0 0 24 24"><path fill="url(#gb)" stroke="#26c" d="M3 1h4v15h4v6H0v-6h3z"/><path fill="#f4c860" stroke="#a70" d="M13 3h7c4 0 4 17 0 18h-7v-6h4V9h-4z"/></symbol>
    <symbol id="t7" viewBox="0 0 24 24"><path fill="#fff3a8" stroke="#b93" d="M3 1h13l5 5v17H3z"/><circle cx="12" cy="13" r="6.500" fill="#3b8ee8"/><path fill="#3cae48" d="M8 9l6-1 2 4-4 6-3-4z"/></symbol>
    <symbol id="t8" viewBox="0 0 24 24"><circle cx="12" cy="12" r="10" fill="#eaf3fb" stroke="#567" stroke-width="2"/><path stroke="#567" stroke-width="1.500" d="M12 4v2M12 18v2M4 12h2M18 12h2"/><path fill="none" stroke="#223" stroke-width="1.700" d="M12 5v7h6"/></symbol>
    <symbol id="t9" viewBox="0 0 24 24"><path fill="#d8ecf4" stroke="#478" d="M2 3l5 1v18l-5 1z"/><path fill="#fff" stroke="#448" d="M7 3h15v18H7z"/><circle cx="12" cy="7" r="2" fill="#35d"/><circle cx="12" cy="12" r="2" fill="#2a4"/><circle cx="12" cy="17" r="2" fill="#d24"/><path stroke="#335" stroke-width="1.500" d="M16 7h4M16 12h4M16 17h4"/></symbol>
    <symbol id="t10" viewBox="0 0 24 24"><path fill="url(#rainv)" d="M1 1h8v22H1z"/><path stroke="#3c49c8" stroke-width="2.600" d="M14 11l8 11"/><path fill="#f9fa8a" stroke="#cd5" d="M14 2l2 4 5-2-3 5 3 3-5-1-3 4-1-5-4-2 5-1z"/></symbol>
    <symbol id="t11" viewBox="0 0 24 24"><use href="#mill" transform="translate(2 3) scale(1 1.200)"/><use href="#holder" transform="translate(7 5)" stroke-width="1.200"/><path stroke="#3c49c8" stroke-width="2.600" d="M14 11l8 11"/><path fill="#e9fa9a" d="M14 1l2 4 4-2-2 5 3 3-5-1-3 4-1-5-4-2 5-1z"/><use href="#star" transform="translate(0 13)"/></symbol>
    <!-- taskbar -->
    <symbol id="k1" viewBox="0 0 24 24"><g fill="#e6e6e6"><circle cx="7" cy="6" r="5"/><circle cx="7" cy="18" r="5"/><circle cx="17" cy="9" r="5"/></g><path fill="#3b8ee8" stroke="#fff" d="M14 14l5-2 4 2c0 5-1 7-4 9-4-2-5-4-5-9z"/><path fill="#fc3" d="M19 13l3 1v4h-3z"/></symbol>
    <symbol id="k2" viewBox="0 0 24 24"><path fill="#b30b00" stroke="#e54" stroke-width=".6" d="M1 1h22v22H1z"/><path fill="none" stroke="#fff" stroke-width="1.500" d="M4 19c4-3 8-10 7-14 1 7 6 11 10 10-4-2-11 0-17 4z"/></symbol>
    <symbol id="k3" viewBox="0 0 24 24"><path fill="#f6dd8c" stroke="#c9a24a" d="M1 4h8l1 2h12v15H1z"/><path fill="#fff0b8" d="M3 8h18v6H3z"/><path fill="#7cc0e8" stroke="#4a8ab8" d="M4 22v-7h16v7h-4v-4H8v4z"/></symbol>
    <symbol id="y1" viewBox="0 0 24 24"><path fill="#f08a1c" stroke="#fff0d8" stroke-width="2" d="M3 3h18v18H3z"/><path fill="#fff" d="M9 7c7 0 8 10 0 10z"/></symbol>
    <symbol id="y2" viewBox="0 0 24 24"><circle cx="12" cy="12" r="9" fill="#e9a21c" stroke="#111" stroke-width="3"/><path fill="none" stroke="#111" stroke-width="2.500" d="M12 7l5 8H7z"/></symbol>
    <symbol id="y3" viewBox="0 0 24 24"><path stroke="#e32219" stroke-width="3" d="M12 0v24M0 12h24M3 3l18 18M21 3L3 21"/><circle cx="12" cy="12" r="7" fill="#ffc61c" stroke="#e32219"/><path fill="none" stroke="#311" stroke-width="1.800" d="M8 13c2 4 6 4 8 0M9 8v3M15 8v3"/></symbol>
    <symbol id="y4" viewBox="0 0 24 24"><path fill="#ddd" stroke="#777" d="M3 1h8v8H3z"/><path fill="#777" d="M2 9h10v8l-3 3v4H5v-4l-3-3z"/><circle cx="17" cy="17" r="7" fill="#2fae2c"/><path fill="none" stroke="#fff" stroke-width="2.500" d="M13 17l3 4 5-8"/></symbol>
    <symbol id="y5" viewBox="0 0 24 24"><path fill="url(#gy)" stroke="#a87800" d="M2 1h20v15l-10 8-10-8z"/><path stroke="#a87800" d="M7 2v17M12 2v21M17 2v17"/></symbol>
    <symbol id="y6" viewBox="0 0 24 24"><path fill="#fff" d="M1 8h4l7-6v20l-7-6H1z"/><path fill="none" stroke="#fff" stroke-width="1.800" d="M15 8c2 3 2 5 0 8M18 5c4 5 4 9 0 14M21 3c5 6 4 12 0 18"/></symbol>
    <symbol id="y7" viewBox="0 0 24 24"><path fill="#fff" d="M2 1h2v22H2zM5 3c4-1 6 0 9 2l8 1-3 7c-4 1-6-1-8-1H5z"/></symbol>
    <symbol id="y8" viewBox="0 0 24 24"><path fill="#fff" d="M0 19h3v4H0zM5 16h3v7H5zM10 12h3v11h-3zM15 8h3v15h-3z"/><path fill="none" stroke="#ddd" d="M20.500 4.500h3v18h-3z"/></symbol>
  </svg>

  <!-- Title bar -->
  <header class="h-[22px] shrink-0 flex items-center pl-1 border-t border-black bg-linear-to-b from-[#77767c] from-0% via-[#4a494e] via-30% to-[#1c1c1c] to-34% text-white">
    <svg class="size-4 mr-1"><use href="#nx"/></svg>
    <h1 class="text-[12px]">NX 6 - Manufacturing - [model1.prt (Modified) ]</h1>
    <span class="ml-auto mr-6 text-[11px] font-bold font-['DejaVu_Sans',sans-serif]">SIEMENS</span>
    <div class="flex gap-1">
      <button aria-label="Minimize" class="w-[18px] h-[18px] rounded-sm border border-[#666] bg-linear-to-b from-[#777] to-[#333]"><svg viewBox="0 0 16 16"><path fill="#fff" d="M3 10h7v3H3z"/></svg></button>
      <button aria-label="Restore" class="w-[18px] h-[18px] rounded-sm border border-[#666] bg-linear-to-b from-[#777] to-[#333]"><svg viewBox="0 0 16 16"><path fill="none" stroke="#fff" stroke-width="1.500" d="M3 7h6v6H3zM6 6V3h7v7h-3"/></svg></button>
      <button aria-label="Close" class="w-[18px] h-[18px] rounded-sm border border-[#e98] bg-linear-to-b from-[#f08a70] to-[#dc3a18]"><svg viewBox="0 0 16 16"><path stroke="#fff" stroke-width="2.500" d="M3 3l10 10M13 3L3 13"/></svg></button>
    </div>
  </header>

  <!-- Menu bar -->
  <nav class="h-[27px] shrink-0 flex items-center pl-[3px] pr-[5px] border-b border-[#b4b4b4] bg-linear-to-b from-[#e6e6e6] to-[#dedede]">
    <span class="h-5 border-l-2 border-dotted border-[#aaa]"></span>
    <svg class="size-[18px] ml-[2px] mr-[5px]"><use href="#part"/></svg>
    <div id="menu" class="flex gap-[11px]"></div>
    <div class="ml-auto flex gap-[3px]">
      <button aria-label="Minimize document" class="size-4 rounded-sm border border-[#777] bg-[#f2f2f2]"><svg viewBox="0 0 16 16"><path fill="#555" d="M4 11h7v2H4z"/></svg></button>
      <button aria-label="Restore document" class="size-4 rounded-sm border border-[#777] bg-[#f2f2f2]"><svg viewBox="0 0 16 16"><path fill="none" stroke="#555" stroke-width="1.500" d="M3 7h7v6H3zM6 6V4h7v6h-3"/></svg></button>
      <button aria-label="Close document" class="size-4 rounded-sm border border-[#777] bg-[#f2f2f2]"><svg viewBox="0 0 16 16"><path stroke="#555" stroke-width="3" d="M4 4l8 8M12 4l-8 8"/></svg></button>
    </div>
  </nav>

  <!-- Standard toolbar -->
  <div class="h-[34px] shrink-0 flex bg-linear-to-b from-[#dcdcdc] to-[#d3d3d3] border-b border-[#c0c0c0]">
    <div class="flex border-r border-[#b0b0b0] pl-[3px]">
      <span class="my-[5px] mr-1 border-l-2 border-dotted border-[#aaa]"></span>
      <button class="flex items-center w-[66px]"><svg class="size-[26px]"><use href="#nx"/></svg><span class="ml-[3px]">Start</span><span class="ml-[3px] border-x-[3px] border-t-[3px] border-x-transparent border-t-black"></span></button>
      <div class="flex" data-tools="new open save print | cut copy paste delete | undo | infow | find ^"></div>
    </div>
  </div>

  <!-- View, layer and utility toolbars -->
  <div class="h-[35px] shrink-0 flex bg-linear-to-b from-[#d8d8d8] to-[#c9c9c9] border-b-2 border-[#9c9c9c]">
    <div class="flex ml-[50px] pl-1 border-l border-white">
      <span class="my-[5px] border-l-2 border-dotted border-[#aaa]"></span>
      <div class="flex" data-tools="fit fitsel zoomwin zoomio rotate pan persp iso v render rainbow wire yin clip v white v | slabgo slab slabnew ^"></div>
    </div>
    <div class="flex pl-1 border-l border-white">
      <span class="my-[5px] mr-[5px] border-l-2 border-dotted border-[#aaa]"></span>
      <label class="relative self-center w-[47px] h-[21px] mr-[5px]">
        <span class="sr-only">Work layer</span>
        <select class="appearance-none w-full h-full pl-1 leading-4 bg-white border border-[#6b6f74] rounded-[4px]"><option>1</option></select>
        <span class="absolute right-px inset-y-px w-[17px] bg-linear-to-b from-[#d8ecfa] to-[#6cb4ea] flex items-center justify-center pointer-events-none"><span class="border-x-[5px] border-t-[6px] border-x-transparent border-t-[#111]"></span></span>
      </label>
      <div class="flex" data-tools="layset laywin stack laymove laycopy | *wcs wcsdyn wcssave palette showhide hide showsel showall | section sectedit | measure angle ^"></div>
    </div>
    <div class="flex flex-1 pl-1 border-l border-white">
      <span class="my-[5px] mr-[2px] border-l-2 border-dotted border-[#aaa]"></span>
      <div class="flex" data-tools="*navprog navtool navgeo navmeth navexp ^"></div>
    </div>
  </div>

  <!-- Selection bar -->
  <div class="h-[30px] shrink-0 flex items-center pl-[5px] pr-1 pb-[2px] bg-linear-to-b from-[#c8c8c8] to-[#dadada] border-b border-[#b0b0b0]">
    <label class="relative w-[131px] h-[21px] mr-2">
      <span class="sr-only">Selection filter</span>
      <select class="appearance-none w-full h-full pl-1 leading-4 bg-white border border-[#6b6f74] rounded-[4px]"><option>No Selection Filter</option></select>
      <span class="absolute right-px inset-y-px w-[17px] bg-linear-to-b from-[#d8ecfa] to-[#6cb4ea] flex items-center justify-center pointer-events-none"><span class="border-x-[5px] border-t-[6px] border-x-transparent border-t-[#111]"></span></span>
    </label>
    <label class="relative w-[138px] h-[21px] mr-1">
      <span class="sr-only">Selection scope</span>
      <select class="appearance-none w-full h-full pl-1 leading-4 bg-white border border-[#6b6f74] rounded-[4px]"><option>Entire Assembly</option></select>
      <span class="absolute right-px inset-y-px w-[17px] bg-linear-to-b from-[#d8ecfa] to-[#6cb4ea] flex items-center justify-center pointer-events-none"><span class="border-x-[5px] border-t-[6px] border-x-transparent border-t-[#111]"></span></span>
    </label>
    <div class="flex h-full" data-small data-tools="selgrey | selfilt v back eraser greyaim greytool | rect v | snapcube"></div>
    <span class="ml-auto self-end mb-[3px] border-x-[3px] border-t-[3px] border-x-transparent border-t-black"></span>
  </div>

  <!-- Cue and status line -->
  <div class="h-[22px] shrink-0 flex bg-[#d9d9d9] border-y border-t-white border-b-[#999]">
    <div class="w-[681px] border-r border-[#a8a8a8]"></div>
    <p class="flex-1 border-l border-white pl-[2px] leading-[18px] font-bold">Extrude(1)</p>
    <div class="w-5 border-l-2 border-[#f2f2f2]"></div>
    <div class="w-[35px] border-l-2 border-[#f2f2f2]"></div>
    <button aria-label="Full screen" class="w-6 border-l border-[#b0b0b0] flex items-center justify-center"><svg class="size-[14px]"><use href="#full"/></svg></button>
  </div>
  <div class="relative h-[15px] shrink-0 px-[5px] pt-1 bg-linear-to-b from-[#b9b9b9] to-[#e2e2e2] border-b-2 border-[#777]">
    <div class="h-[4px] rounded-full border border-t-[#8a8a8a] border-x-[#8a8a8a] border-b-white bg-[#c4c4c4]"></div>
    <div class="absolute z-10 right-[126px] top-0 w-[110px] h-[22px] flex border border-[#555] bg-linear-to-b from-[#444] to-[#181818] from-30% to-34%">
      <button aria-label="Scroll left" class="w-[21px] bg-linear-to-b from-[#f2f2f2] to-[#c4c4c4]"><svg viewBox="0 0 20 20"><path fill="none" stroke="#555" stroke-width="3" d="M13 5l-7 5 7 5"/></svg></button>
      <button aria-label="Scroll right" class="ml-auto w-[21px] bg-linear-to-b from-[#f2f2f2] to-[#c4c4c4]"><svg viewBox="0 0 20 20"><path fill="none" stroke="#555" stroke-width="3" d="M7 5l7 5-7 5"/></svg></button>
    </div>
  </div>

  <!-- Work area -->
  <main class="flex-1 min-h-0 flex bg-[#cdcdcd]">
    <div class="flex-1 min-w-0 ml-[2px] mt-px border border-[#ff9a3c] bg-[#008200]">
      <svg class="block w-full h-full" viewBox="3 187 1358 579" preserveAspectRatio="xMinYMin slice" role="img" aria-label="Engraving toolpath">
        <defs>
          <linearGradient id="body" gradientUnits="userSpaceOnUse" x1="3" y1="283" x2="673" y2="1247">
            <stop stop-color="#005e00"/><stop offset=".05" stop-color="#006c00"/><stop offset=".16" stop-color="#008000"/><stop offset=".3" stop-color="#008600"/><stop offset=".5" stop-color="#008500"/><stop offset=".62" stop-color="#007e00"/><stop offset=".73" stop-color="#007300"/><stop offset=".85" stop-color="#007c00"/><stop offset="1" stop-color="#008400"/>
          </linearGradient>
          <linearGradient id="sky" x2="0" y2="1"><stop stop-color="#24224e"/><stop offset="1" stop-color="#1f3260"/></linearGradient>
        </defs>
        <path fill="url(#body)" d="M0 180h1440v600H0z"/>
        <path fill="url(#sky)" d="M0 186h143L3 284H0z"/>

        <!-- left half of the toolpath -->
        <g transform="translate(340 290) scale(.33333)" fill="none" stroke-width="6">
          <g stroke="#0a90ff" stroke-width="5">
            <path d="M74 297l95 38M46 369l77-51M130 403l124-30-28 70M192 387l48 18 14-32M262 460l75-55M690 638l23 5M718 632l60-42"/>
            <path stroke-width="2" d="M284 442h136"/>
            <path stroke-width="3" stroke-dasharray="6 5" d="M530 566l18 16 57 19 23 3 22-17-10-9-50-18-24-21 19-16 40 3 60 30"/>
            <path stroke-width="2" stroke-dasharray="5 7" d="M865 620l-78 52 95 34M830 648l65 20M905 634l52 19M1080 725l30-14"/>
          </g>
          <path stroke="#fff" stroke-width="7" d="M42 246l4 123M71 176l3 121M221 330l5 113M235 285l5 120M333 283l4 122M340 380l4 115M416 325l4 117M710 535l3 110M774 480l4 110M786 486l3 110M891 560l4 110M952 535l5 118"/>
          <path stroke="#ffc0cb" d="M220 308l1 24M416 308v22M339 370l1 16"/>
          <path stroke="#ff0" stroke-width="7" d="M119 205l4 113M126 285l4 118M165 205l4 130M188 265l4 122M257 345l5 115M280 320l4 125M337 330l2 38M524 450l6 116M685 525l5 113M699 535l3 108M763 477l3 109M821 537l3 109M877 590l5 116M1129 620l4 120"/>
          <path stroke="#ff9a00" stroke-width="7" d="M99-309l20 514M126 258v29M165 205v14M257 325v20M336 318v14M524 405v46M684 490l1 37M877 577v14M1129 617v12"/>
          <path stroke="#965c30" stroke-width="7" d="M42 244l123-38M71 176l55 82M188 266l33 42M235 286l22 40M280 320l53-36M335 318l81-10M339 369l185 36M682 427l3 65M697 534h15M761 476l14 3M786 486l92 92M821 537l131-3M891 560l238 57"/>
          <path stroke="#fff" d="M66 62l95 23M38 126l77-53M119 147l124-43-27 64M183 125l45 11M250 178l76-53M272 160l137-15M332 158v38M674 215l-18-10-46-12-32-1-22 17 14 10 50 13 17 10-24 17-33-1-47-12-16-10M752 228l25 6M765 231l-73 53M677 281l23 6M943 273l-95-23-75 53 94 23M812 276l70 18"/>
        </g>

        <!-- right half of the toolpath -->
        <g transform="translate(680 380) scale(.33333)" fill="none" stroke-width="6">
          <g stroke="#0a90ff" stroke-width="3">
            <path stroke-dasharray="6 8" stroke-width="2" d="M40 472l45-25 55-8M232 465l93 23M290 540l120-43M494 508l-54 54 100-45-53 52 73-34"/>
            <path stroke-dasharray="18 2" stroke-width="4" d="M52 490l48 11 35-3 19-11M158 517l74-52 40 8M200 493l67 7M620 523l-72 51 94 6M606 550l50 3M656 527l64 2M677 580l73-50 92 5-28 20h-94M882 530l-60 44 8 9 50-1 32-10 65-45M960 574h40l45-12 60-42M1234 509l-95 8-76 51 96-6M1105 541l68-3"/>
            <path stroke-width="2" d="M494 508l-54 54 40-20M383 545l17-27"/>
          </g>
          <path stroke="#fff" stroke-width="7" d="M178 353l4 114M191 376l5 114M249 423l3 113M379 445l4 111M393 410l4 116M585 400l3 117M653 435l3 118M713 440l2 115M768 472l3 111M973 398l4 129M1102 390l3 128M1168 418l5 120M1230 387l4 122"/>
          <path stroke="#ffc0cb" stroke-width="7" d="M583 366l2 34M652 409l1 28M713 396v44M767 448l1 26M1100 362l1 30"/>
          <path stroke="#ff0" stroke-width="7" d="M109 360l4 110M154 402l4 115M264 391l3 111M285 430l4 112M346 403l4 115M490 399l4 109M582 433l4 114M638 470l4 113M673 470l4 113M782 445l4 111M878 405l4 125M946 449l4 120M1099 425l4 117M1155 440l4 122"/>
          <path stroke="#ff9a00" stroke-width="7" d="M109 346v16M581 400l1 35M638 447v24M673 452v20M782 429v18M878 405v12M1098 390l1 36"/>
          <path stroke="#965c30" stroke-width="7" d="M0 321l109 25M153 402l25-49M192 376l72 15M249 423l36 7M346 403l33 42M393 410l97-11M582 366l56 81M580 398l134-2M652 409l21 43M712 412l70 17M767 448l111-43M946 449l25-54M1101 362l54 76M1097 388l134-2"/>
          <path stroke="#fff" d="M167 76l-9-15-46-12-40 5-46 32 10 15 48 13 39-6 22-15-46-13M145 128l75-53 69 17 17 10-22 16-32 2-65-19M252 120l-13 31M274 159l123-41-27 64M336 139l48 10M479 139l-51 56 97-45-48 57 98-47M704 192l-93-22-75 52 93 23M574 195l69 17M665 253l76-52 71 17 16 11-22 15-33 1-67-18M773 245l-13 31M871 233l-60 41 6 16 48 12 42-4 59-42M941 306l10 17 46 10 41-5 59-41M1226 319l-95-23-74 53 94 22M1098 321l68 17"/>
          <path stroke="#f0b8c0" stroke-width="7" d="M1131-579l37 997"/>
        </g>

        <!-- machine coordinate system -->
        <g fill="none" stroke="#f0c896">
          <path d="M649 187h1l5 20c0 4-10 4-12 0zM707 237l-14 19M707 237l-20 7"/>
          <path stroke-dasharray="8 6" d="M652 230l56 13M652 228l26-18M678 210v52M693 259v22M693 259l29 7M696 284l26-16"/>
          <ellipse cx="691" cy="247" rx="5" ry="6"/>
          <path d="M714 283l22 11h-25c-2-4-1-10 3-11zM648 275h8"/>
          <path stroke="#2020ff" stroke-width="2" d="M650 210l2 64"/>
          <path stroke="#66ff55" stroke-width="2" d="M652 274l38-26"/>
          <path stroke="#ff3525" stroke-width="2" d="M652 274l62 16"/>
        </g>
        <g font-family="Liberation Sans" font-size="9" font-weight="700" fill="#f3a04a">
          <text x="650" y="206">ZM</text><text x="651" y="239">ZC</text><text x="693" y="247">YM</text><text x="674" y="260">YC</text><text x="686" y="283">XC</text><text x="716" y="291">XM</text>
          <text x="709" y="235" fill="#f0c896">Y</text><text x="740" y="296" fill="#f0c896">X</text>
        </g>

        <!-- view triad -->
        <path stroke="#2035e0" stroke-width="2" d="M57 711v-26"/><path stroke="#1fb7a0" stroke-width="2" d="M57 711l16-11"/><path stroke="#e8231a" stroke-width="2" d="M57 711l24 6"/>
        <circle cx="57" cy="711" r="3" fill="#b9c9c9"/>
        <g font-family="Liberation Sans" font-size="8" font-weight="700"><text x="54" y="682" fill="#2035e0">Z</text><text x="75" y="701" fill="#1fb7a0">Y</text><text x="86" y="720" fill="#e8231a">X</text></g>
        <text x="6" y="762" font-family="Open Sans" font-size="13" font-weight="600" fill="#e0a030">TFR-TRI WORK Camera TFR-TRI</text>
      </svg>
    </div>

    <!-- CAM toolbars -->
    <aside class="w-[35px] ml-[2px] flex flex-col border-r border-[#bbb]">
      <div class="flex flex-col items-center bg-[#d4d4d4] border-b border-[#aaa] pt-[3px] h-[177px]">
        <span class="w-6 mb-[3px] border-t-2 border-dotted border-[#999]"></span>
        <div class="contents" data-column="r1 r2 r3 r4 r5 &lt;"></div>
      </div>
      <div class="flex flex-col items-center bg-[#d4d4d4] border-y border-t-white border-b-[#aaa] mt-[2px] pt-[3px] h-[375px]">
        <span class="w-6 mb-px border-t-2 border-dotted border-[#999]"></span>
        <div class="contents" data-column="r6 r7 r8 r9 r10 | r11 r12 | r13 r14 r15 r16 &lt;"></div>
      </div>
    </aside>
    <div class="w-2 bg-[#ececec] border-r border-[#888]"></div>

    <!-- Resource bar -->
    <aside class="w-[33px] flex flex-col bg-linear-to-r from-[#8c8c8c] to-[#b4b4b4] pt-4">
      <div id="tabs" class="flex flex-col"></div>
      <div class="mt-[2px] h-2 w-[26px] rounded-t border border-[#777] bg-[#ccc]"></div>
      <div class="mt-auto mb-[2px] ml-[6px] flex flex-col gap-px">
        <button aria-label="First tab" class="size-4 bg-[#eee] border border-[#888]"><svg viewBox="0 0 16 16"><path fill="#aaa" d="M3 3h10v2H3zM8 6l5 5H3z"/></svg></button>
        <button aria-label="Previous tab" class="size-4 bg-[#eee] border border-[#888]"><svg viewBox="0 0 16 16"><path fill="#aaa" d="M8 5l5 5H3z"/></svg></button>
        <button aria-label="Next tab" class="size-4 bg-[#eee] border border-[#888]"><svg viewBox="0 0 16 16"><path fill="#333" d="M8 11l5-5H3z"/></svg></button>
        <button aria-label="Last tab" class="size-4 bg-[#eee] border border-[#888]"><svg viewBox="0 0 16 16"><path fill="#333" d="M8 9l5-5H3zM3 11h10v2H3z"/></svg></button>
      </div>
    </aside>
  </main>

  <!-- Bottom toolbars -->
  <footer class="shrink-0 border-t border-white bg-linear-to-b from-[#e4e4e4] to-[#cacaca]">
    <div class="h-[34px] flex border-b border-[#bbb]">
      <div class="flex pl-1 border-r border-[#aaa]">
        <span class="my-[5px] mr-[2px] border-l-2 border-dotted border-[#aaa]"></span>
        <div class="flex" data-tools="a1 a2 a3 a4 a5 a6 | a7 a8 a9 a10 a11 a12 a13 a14 a15 a16 | a17 a18 | a19 a20 a21 a22 a23 | a24 ^"></div>
      </div>
    </div>
    <div class="h-[34px] flex">
      <div class="flex pl-1 border-r border-b border-[#aaa]">
        <span class="my-[5px] mr-[2px] border-l-2 border-dotted border-[#aaa]"></span>
        <div class="flex" data-tools="s1 s2 s3 s4 s5 s6 s7 | s8 v | s9 v | s10 v | s11 v | s12 s13 ^"></div>
      </div>
      <div class="flex ml-[147px] pl-1 border border-t-white border-l-white border-[#aaa]">
        <span class="my-[5px] border-l-2 border-dotted border-[#aaa]"></span>
        <div class="flex" data-tools="f1 v a21 f2 v f3 v f4 f5 f6 v ^"></div>
      </div>
    </div>
    <div class="h-[34px] flex">
      <div class="flex ml-[502px] pl-1 border border-t-white border-l-white border-[#aaa]">
        <span class="my-[5px] border-l-2 border-dotted border-[#aaa]"></span>
        <div class="flex" data-tools="m1 m2 m3 m4 ^"></div>
      </div>
    </div>
  </footer>

  <!-- Taskbar -->
  <div class="relative h-[30px] shrink-0 flex items-center border-t border-[#222] text-white">
    <svg class="absolute inset-0 w-full h-full" viewBox="0 0 1440 30" preserveAspectRatio="none" aria-hidden="true">
      <defs>
        <linearGradient id="tb"><stop stop-color="#0f110f"/><stop offset=".1" stop-color="#151914"/><stop offset=".19" stop-color="#2b2a28"/><stop offset=".21" stop-color="#777677"/><stop offset=".38" stop-color="#858386"/><stop offset=".41" stop-color="#987178"/><stop offset=".69" stop-color="#9b747d"/><stop offset=".72" stop-color="#807e80"/><stop offset=".78" stop-color="#626263"/><stop offset=".9" stop-color="#5e5e61"/><stop offset=".93" stop-color="#41302c"/><stop offset=".97" stop-color="#141712"/></linearGradient>
        <filter id="soft"><feGaussianBlur stdDeviation="5"/></filter>
      </defs>
      <path fill="url(#tb)" d="M0 0h1440v30H0z"/>
      <g filter="url(#soft)"><ellipse cx="730" cy="0" rx="100" ry="20" fill="#77594a"/><ellipse cx="908" cy="24" rx="30" ry="20" fill="#755847"/><ellipse cx="1345" cy="24" rx="40" ry="14" fill="#4c332d"/></g>
      <path fill="#fff" opacity=".35" d="M0 0h1440v1H0z"/>
    </svg>
    <button aria-label="Start menu" class="relative ml-2 size-9 shrink-0 rounded-full border border-[#9fc4d8] bg-radial-[at_50%_90%] from-[#4fd0ff] via-[#2a6f9c] to-[#3a5c78]">
      <svg viewBox="0 0 36 36"><path fill="#e8632a" d="M10 10c3-2 5-2 8-1l-2 8c-3-1-5-1-8 1z"/><path fill="#8cc63e" d="M19 10c3 1 5 1 9-1l-2 8c-3 1-6 1-9 0z"/><path fill="#4aa3e8" d="M8 19c2-1 5-1 8 0l-2 8c-2-1-5-1-8 0z"/><path fill="#fbcb2e" d="M17 19c2 1 5 1 9 0l-2 7c-3 2-6 2-9 1z"/></svg>
    </button>
    <a href="#" aria-label="Messenger" class="relative ml-[29px]"><svg class="size-4"><use href="#k1"/></svg></a>
    <a href="#" aria-label="PDF reader" class="relative ml-[30px]"><svg class="size-4"><use href="#k2"/></svg></a>
    <a href="#" aria-label="Explorer" class="relative ml-[30px]"><svg class="size-[18px]"><use href="#k3"/></svg></a>
    <button aria-label="Word" class="relative ml-[15px] w-[42px] h-7 rounded-sm border border-[#8a8a8a] bg-white/20 flex items-center justify-center">
      <span class="size-4 bg-[#2b57a5] border border-[#dfe8f6] text-white text-[11px] leading-[14px] font-bold text-center">W</span>
    </button>
    <button aria-label="NX" class="relative ml-1 w-[42px] h-7 rounded-sm border border-[#ccc] bg-white/45 flex items-center justify-center"><svg class="size-[18px]"><use href="#nx"/></svg></button>
    <div id="tray" class="relative ml-auto flex gap-2"></div>
    <time class="relative ml-8 mr-[25px] text-[12px]">14:32</time>
    <button aria-label="Show desktop" class="relative w-[13px] h-7 mr-px border border-[#777] bg-linear-to-br from-[#555] to-[#111]"></button>
  </div>

  <script>
    const icon = (name, cls) => `<svg class="${cls}"><use href="#${name}"/></svg>`;
    const arrow = '<span class="border-x-[3px] border-t-[3px] border-x-transparent border-t-black"></span>';

    // "|" separator, "v" drop-down arrow, "^" overflow arrow, "*" pressed button
    document.querySelectorAll("[data-tools]").forEach((bar) => {
      const small = "small" in bar.dataset;
      bar.innerHTML = bar.dataset.tools.split(" ").map((t) => {
        if (t === "|") return '<span class="w-px mx-[2px] my-[2px] bg-[#f4f4f4] border-l border-[#bbb] box-content"></span>';
        if (t === "v") return `<button aria-label="More" class="${small ? "w-2" : "w-3"} flex items-center justify-center">${arrow}</button>`;
        if (t === "^") return `<button aria-label="Toolbar options" class="w-[13px] pb-2 flex items-end justify-center">${arrow}</button>`;
        const on = t[0] === "*";
        const name = on ? t.slice(1) : t;
        if (small) return `<button aria-label="${name}" class="w-[23px] flex items-center justify-center">${icon(name, "size-[17px]")}</button>`;
        return on
          ? `<button aria-label="${name}" class="w-[31px] my-[2px] rounded-sm border border-[#555] bg-white flex items-center justify-center">${icon(name, "size-[23px]")}</button>`
          : `<button aria-label="${name}" class="w-[31px] flex items-center justify-center">${icon(name, "size-[23px]")}</button>`;
      }).join("");
    });

    document.querySelectorAll("[data-column]").forEach((col) => {
      col.innerHTML = col.dataset.column.split(" ").map((t) => {
        if (t === "|") return '<span class="w-[30px] h-[2px] my-px border-t border-[#aaa] bg-white"></span>';
        if (t === "<") return '<button aria-label="More" class="self-start ml-1 my-1 border-y-[3px] border-r-[3px] border-y-transparent border-r-black"></button>';
        return `<button aria-label="${t}" class="h-[31px] flex items-center">${icon(t, "size-[23px]")}</button>`;
      }).join("");
    });

    // "_X" marks the access key
    document.getElementById("menu").innerHTML =
      "_File _Edit _View In_sert Fo_rmat _Tools _Assemblies _Information Ana_lysis _Preferences Wind_ow _Help"
        .split(" ")
        .map((m) => `<a href="#">${m.replace(/_(.)/, '<span class="underline">$1</span>')}</a>`)
        .join("");

    document.getElementById("tabs").innerHTML = ["t1", "t2", "t3", "t4", "t5", "t6", "t7", "t8", "t9", "t10", "t11"].map((t) => {
      const cls = t === "t3"
        ? "h-[43px] w-[28px] mb-px rounded-r-md border border-l-0 border-[#777] bg-[#eee]"
        : t === "t7" || t === "t8"
          ? "h-10 w-[26px] mt-3 mb-[2px] rounded-r-md border border-[#666] bg-[#ccc]"
          : "h-10 w-[26px] mb-[2px] rounded-r-md border border-[#666] bg-[#ccc]";
      return `<button aria-label="${t}" class="${cls}">${icon(t, "size-6")}</button>`;
    }).join("");

    document.getElementById("tray").innerHTML = ["y1", "y2", "y3", "y3", "y4", "y5", "y6", "y7", "y8"]
      .map((t) => `<a href="#" aria-label="${t}">${icon(t, "size-4")}</a>`).join("");
  </script>
</body>
</html>
